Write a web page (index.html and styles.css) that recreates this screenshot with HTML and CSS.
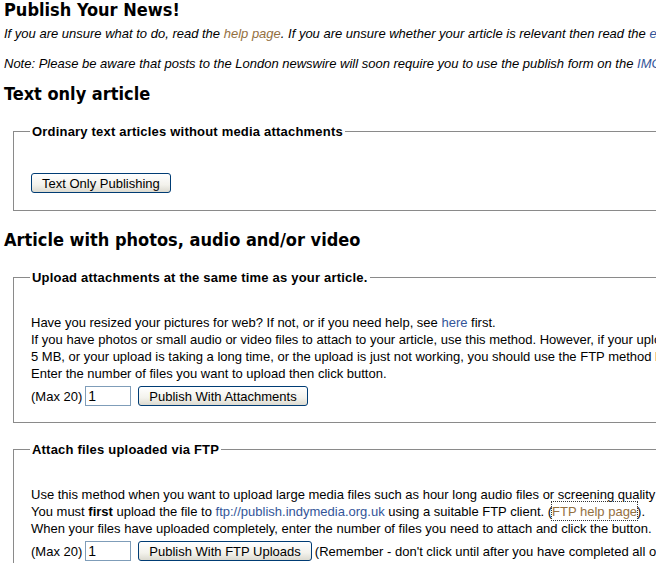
FILE: index.html
```html
<!DOCTYPE html>
<html lang="en">
<head>
  <meta charset="UTF-8">
  <title>Publish Your News!</title>
  <link rel="stylesheet" href="styles.css">
</head>
<body>
  <div class="page">
    <h1>Publish Your News!</h1>
    <p class="intro">If you are unsure what to do, read the <a href="#" class="brown">help page</a>. If you are unsure whether your article is relevant then read the <a href="#">editorial guidelines</a>.</p>
    <p class="intro note">Note: Please be aware that posts to the London newswire will soon require you to use the publish form on the <a href="#">IMC London site</a>.</p>

    <h2>Text only article</h2>
    <fieldset>
      <legend>Ordinary text articles without media attachments</legend>
      <div class="first-row">
        <button type="button">Text Only Publishing</button>
      </div>
    </fieldset>

    <h2 class="second">Article with photos, audio and/or video</h2>
    <fieldset>
      <legend>Upload attachments at the same time as your article.</legend>
      <div class="text">
        Have you resized your pictures for web? If not, or if you need help, see <a href="#">here</a> first.<br>
        If you have photos or small audio or video files to attach to your article, use this method. However, if your upload is larger than<br>
        5 MB, or your upload is taking a long time, or the upload is just not working, you should use the FTP method below.<br>
        Enter the number of files you want to upload then click button.
      </div>
      <div class="row">
        <span>(Max 20)</span>
        <input type="text" value="1">
        <button type="button">Publish With Attachments</button>
      </div>
    </fieldset>

    <fieldset class="ftp">
      <legend>Attach files uploaded via FTP</legend>
      <div class="text">
        Use this method when you want to upload large media files such as hour long audio files or screening quality video.<br>
        You must <b>first</b> upload the file to <a href="#">ftp://publish.indymedia.org.uk</a> using a suitable FTP client. (<a href="#" class="brown focused">FTP help page</a>).<br>
        When your files have uploaded completely, enter the number of files you need to attach and click the button.
      </div>
      <div class="row">
        <span>(Max 20)</span>
        <input type="text" value="1">
        <button type="button" class="wide">Publish With FTP Uploads</button>
        <span>(Remember - don't click until after you have completed all of your FTP uploads)</span>
      </div>
    </fieldset>
  </div>
</body>
</html>
```

FILE: styles.css
```css
html, body {
  overflow: hidden;
}
body {
  margin: 0;
  padding: 0 4px;
  font-family: "Liberation Sans", Arial, sans-serif;
  font-size: 13px;
  color: #000;
  background: #fff;
}
.page {
  width: 1000px;
}
a {
  color: #335599;
  text-decoration: none;
}
a.brown {
  color: #94703f;
}
a.focused {
  outline: 1px dotted #333;
  padding: 2px 0 1px;
}
h1, h2 {
  font-family: "DejaVu Sans Condensed", "DejaVu Sans", Verdana, sans-serif;
  font-stretch: condensed;
  font-size: 18px;
  font-weight: bold;
  line-height: 20px;
  margin: 0;
}
h2 {
  margin-top: 13px;
}
h2.second {
  margin-top: 19px;
}
.intro {
  font-size: 13px;
  font-style: italic;
  line-height: 14px;
  margin: 7px 0 0;
  white-space: nowrap;
}
.note {
  margin-top: 16px;
}
fieldset {
  margin: 20px 9px 0;
  padding: 0 17px 16px;
  border: 1px solid #8a8a8a;
}
fieldset.ftp {
  margin-top: 19px;
}
legend {
  font-weight: bold;
  font-size: 13px;
  line-height: 15px;
  letter-spacing: 0.2px;
  padding: 0 2px;
  margin-left: -1px;
}
.first-row {
  margin-top: 34px;
  padding-bottom: 1px;
}
.text {
  margin-top: 29px;
  line-height: 17px;
  white-space: nowrap;
}
.row {
  display: flex;
  align-items: center;
  margin-top: 4px;
  white-space: nowrap;
}
.row input {
  width: 46px;
  height: 20px;
  box-sizing: border-box;
  margin: 0 7px 0 3px;
  padding: 0 2px;
  border: 1px solid #7f9db9;
  font-family: "Liberation Sans", Arial, sans-serif;
  font-size: 14px;
}
button {
  height: 20px;
  padding: 0 10px;
  border: 1px solid #003c74;
  border-radius: 3px;
  background: linear-gradient(#ffffff, #f3f2ec 60%, #dcdad0);
  font-family: "Liberation Sans", Arial, sans-serif;
  font-size: 13px;
  color: #000;
}
button.wide {
  margin-right: 3px;
}
```
